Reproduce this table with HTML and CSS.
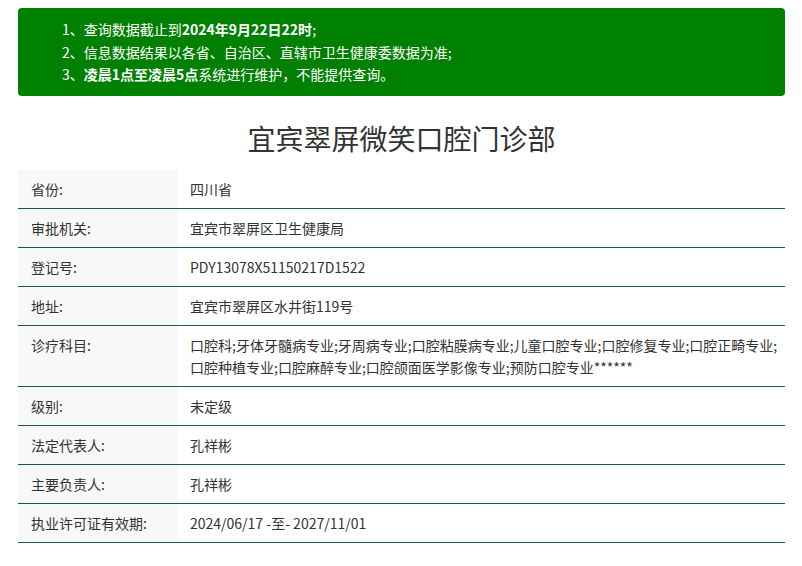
FILE: index.html
```html
<!DOCTYPE html>
<html lang="zh-CN">
<head>
<meta charset="utf-8">
<title>宜宾翠屏微笑口腔门诊部</title>
<link rel="stylesheet" href="styles.css">
</head>
<body>
<div class="page">
  <div class="notice">
    <p>1、查询数据截止到<b>2024年9月22日22时</b>;</p>
    <p>2、信息数据结果以各省、自治区、直辖市卫生健康委数据为准;</p>
    <p>3、<b>凌晨1点至凌晨5点</b>系统进行维护，不能提供查询。</p>
  </div>
  <h1 class="title">宜宾翠屏微笑口腔门诊部</h1>
  <div class="table">
    <div class="row"><div class="label">省份:</div><div class="value">四川省</div></div>
    <div class="row"><div class="label">审批机关:</div><div class="value">宜宾市翠屏区卫生健康局</div></div>
    <div class="row"><div class="label">登记号:</div><div class="value">PDY13078X51150217D1522</div></div>
    <div class="row"><div class="label">地址:</div><div class="value">宜宾市翠屏区水井街119号</div></div>
    <div class="row"><div class="label">诊疗科目:</div><div class="value">口腔科;牙体牙髓病专业;牙周病专业;口腔粘膜病专业;儿童口腔专业;口腔修复专业;口腔正畸专业;口腔种植专业;口腔麻醉专业;口腔颌面医学影像专业;预防口腔专业******</div></div>
    <div class="row"><div class="label">级别:</div><div class="value">未定级</div></div>
    <div class="row"><div class="label">法定代表人:</div><div class="value">孔祥彬</div></div>
    <div class="row"><div class="label">主要负责人:</div><div class="value">孔祥彬</div></div>
    <div class="row"><div class="label">执业许可证有效期:</div><div class="value">2024/06/17 -至- 2027/11/01</div></div>
  </div>
</div>
</body>
</html>
```
FILE: styles.css
```css
* { box-sizing: border-box; }
html, body { margin: 0; padding: 0; background: #fff; }
body {
  font-family: "Noto Sans CJK SC", "Open Sans", sans-serif;
  color: #333;
  font-size: 14px;
}
.page {
  width: 767px;
  margin-left: 18px;
  padding-top: 8px;
}
.notice {
  background: #008000;
  color: #fff;
  border-radius: 4px;
  padding: 10px 20px 11px 44px;
  height: 88px;
}
.notice p {
  margin: 0;
  line-height: 22.5px;
  font-size: 14px;
}
.notice b { font-weight: 700; }
.title {
  margin: 22px 0 12px;
  text-align: center;
  font-weight: 400;
  font-size: 28px;
  line-height: 40px;
  color: #333;
}
.table { display: flex; flex-direction: column; }
.row {
  display: flex;
  border-bottom: 1px solid #215e3e;
}
.label {
  width: 160px;
  flex: none;
  background: #f8f8f8;
  padding: 8px 13px;
  line-height: 22px;
  color: #333;
}
.value {
  flex: 1;
  padding: 8px 0 8px 12px;
  line-height: 22px;
  color: #333;
}
```
